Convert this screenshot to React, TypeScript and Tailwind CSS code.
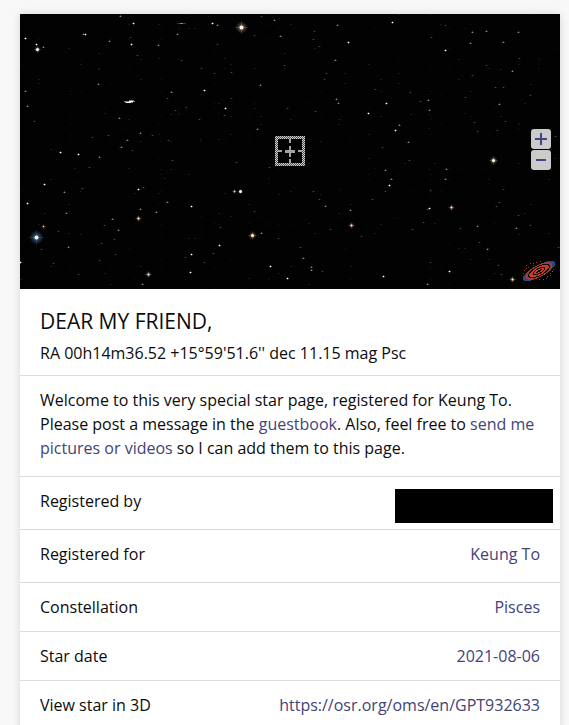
import type { ReactNode } from 'react';

type Point = [x: number, y: number];

const BRIGHT: Point[] = [
  [16, 30], [113, 9], [111, 30], [184, 76], [205, 94], [328, 28], [348, 99], [366, 89], [425, 36], [375, 116],
  [40, 138], [58, 140], [24, 170], [118, 175], [7, 189], [171, 192], [171, 240], [170, 258], [199, 231], [250, 252],
  [267, 264], [369, 171], [429, 257], [363, 262], [65, 20], [372, 8], [192, 9], [5, 24], [0, 248], [409, 194],
];

const MEDIUM: Point[] = [
  [23, 33], [63, 20], [89, 27], [100, 2], [138, 31], [157, 20], [78, 70], [5, 77], [7, 92], [99, 104], [101, 133],
  [107, 126], [120, 119], [151, 78], [197, 11], [254, 6], [260, 22], [317, 11], [315, 46], [240, 71], [316, 85],
  [318, 89], [452, 18], [466, 17], [450, 29], [483, 28], [498, 18], [492, 57], [479, 90], [408, 86], [409, 96],
  [379, 111], [388, 128], [79, 143], [44, 178], [46, 199], [92, 205], [120, 195], [136, 198], [147, 188], [98, 216],
  [48, 233], [122, 270], [241, 219], [291, 253], [291, 256], [283, 244], [330, 196], [305, 192],
  [426, 155], [425, 165], [365, 156], [371, 165], [496, 214], [457, 212], [467, 235], [407, 270], [237, 115],
];

const DIM: Point[] = [
  [110, 23], [117, 41], [161, 46], [14, 107], [88, 121], [132, 121], [147, 84], [155, 96], [166, 93], [148, 126],
  [72, 123], [241, 2], [234, 21], [197, 30], [211, 58], [294, 17], [299, 32], [293, 25], [194, 59], [181, 54],
  [211, 84], [204, 101], [264, 51], [306, 59], [304, 65], [267, 94], [295, 97], [179, 105], [355, 75], [425, 11],
  [411, 23], [499, 44], [466, 51], [452, 61], [475, 73], [483, 73], [510, 81], [445, 83], [390, 78], [400, 87],
  [454, 108], [457, 117], [477, 116], [485, 107], [535, 122], [362, 133], [69, 153], [100, 133], [112, 136],
  [152, 146], [62, 174], [123, 173], [21, 235], [38, 217], [84, 211], [94, 225], [81, 229], [95, 240], [79, 246],
  [58, 260], [165, 243], [33, 249], [216, 148], [249, 153], [200, 213], [193, 239], [184, 248], [302, 257],
  [280, 233], [299, 185], [310, 215], [341, 222], [234, 197], [293, 177], [352, 185], [258, 224], [365, 177],
  [389, 146], [410, 176], [407, 195], [483, 175], [476, 192], [479, 188], [498, 201], [392, 215], [403, 208],
  [440, 214], [459, 228], [478, 251], [481, 260], [410, 248], [538, 233], [510, 211],
];

const GLOWING = [
  { x: 17, y: 35, r: 3, core: 3, color: '#d8d0b8' },
  { x: 221, y: 13, r: 6, core: 4, color: '#c9a978' },
  { x: 16, y: 223, r: 7, core: 4, color: '#5f9bd8' },
  { x: 232, y: 221, r: 4, core: 3, color: '#d8964f' },
  { x: 473, y: 146, r: 4, core: 3, color: '#d8c08a' },
  { x: 220, y: 177, r: 2, core: 3, color: '#b8cce0' },
  { x: 214, y: 177, r: 2, core: 1, color: '#b8cce0' },
  { x: 118, y: 204, r: 3, core: 2, color: '#c98c50' },
  { x: 331, y: 211, r: 3, core: 2, color: '#c97850' },
  { x: 431, y: 193, r: 3, core: 2, color: '#c86a40' },
  { x: 128, y: 260, r: 3, core: 2, color: '#a8a8a0' },
  { x: 492, y: 265, r: 3, core: 2, color: '#c8985a' },
  { x: 23, y: 212, r: 2, core: 1, color: '#d88030' },
];

// faint background grain, same on every render
const GRAIN: Point[] = Array.from({ length: 420 }, (_, i) => [(i * 197 + i * i * 31) % 540, (i * 83 + i * i * 17) % 275]);

function StarField() {
  return (
    <svg className="block size-full" viewBox="0 0 540 275" preserveAspectRatio="xMidYMid slice" shapeRendering="crispEdges" role="img" aria-label="Star map">
      <defs>
        <pattern id="checker" width="2" height="2" patternUnits="userSpaceOnUse">
          <rect width="2" height="2" fill="#4c4c4c" />
          <rect width="1" height="1" fill="#d0d0d0" />
          <rect x="1" y="1" width="1" height="1" fill="#d0d0d0" />
        </pattern>
        {GLOWING.map((s, i) => (
          <radialGradient key={i} id={`glow-${i}`}>
            <stop offset="0" stopColor={s.color} stopOpacity="0.85" />
            <stop offset="0.4" stopColor={s.color} stopOpacity="0.4" />
            <stop offset="1" stopColor={s.color} stopOpacity="0" />
          </radialGradient>
        ))}
      </defs>
      <rect width="540" height="275" fill="#020202" />
      {GRAIN.map(([x, y], i) => (
        <rect key={i} x={x} y={y} width="2" height="1" fill={i % 3 ? '#0f0d0b' : '#1a1815'} />
      ))}
      {DIM.map(([x, y], i) => (
        <g key={i}>
          <rect x={x - 1} y={y} width="3" height="1" fill="#181614" />
          <rect x={x} y={y} width="1" height="1" fill={i % 4 ? '#4c4a46' : '#5e4030'} />
        </g>
      ))}
      {MEDIUM.map(([x, y], i) => (
        <g key={i}>
          <rect x={x - 1} y={y} width="3" height="1" fill="#35322e" />
          <rect x={x} y={y - 1} width="1" height="2" fill="#403c38" />
          <rect x={x} y={y} width="1" height="1" fill="#8c887e" />
        </g>
      ))}
      {BRIGHT.map(([x, y], i) => (
        <g key={i}>
          <rect x={x - 1} y={y} width="3" height="1" fill="#66625a" />
          <rect x={x} y={y - 1} width="1" height="3" fill="#4a4640" />
          <rect x={x} y={y} width="1" height="1" fill="#ffffff" />
        </g>
      ))}
      {GLOWING.map((s, i) => (
        <g key={i}>
          <circle cx={s.x + 0.5} cy={s.y + 0.5} r={s.r} fill={`url(#glow-${i})`} />
          <rect x={s.x - s.r} y={s.y} width={s.r * 2 + 1} height="1" fill={s.color} opacity="0.2" />
          <rect x={s.x} y={s.y - s.r} width="1" height={s.r * 2 + 1} fill={s.color} opacity="0.2" />
          <circle cx={s.x + 0.5} cy={s.y + 0.5} r={s.core / 2} fill="#fff8e8" shapeRendering="auto" />
        </g>
      ))}

      {/* edge-on galaxies */}
      <path d="M104 87h11v1h-11zM105 88h8v1h-8zM109 86h5v1h-5z" fill="#7d858c" />
      <path d="M106 88h3v-1h4v1h-2v1h-5z" fill="#eef4f8" />
      <path d="M157 9h9v1h-9z" fill="#333333" />
      <path d="M160 9h3v1h-3z" fill="#888888" />

      {/* reticle */}
      <path d="M255 122h30v30h-30zM258 125v24h24v-24z" fill="url(#checker)" fillRule="evenodd" />
      <path d="M269 132h2v4h4v3h-4v4h-2v-4h-4v-3h4zM269 125h2v4h-2zM269 145h2v4h-2zM258 136h4v2h-4zM278 136h4v2h-4z" fill="#a3a3a3" />
    </svg>
  );
}

function GalaxyLogo() {
  return (
    <svg className="block h-5 w-8" viewBox="0 0 32 20" shapeRendering="crispEdges" aria-hidden="true">
      <g transform="rotate(-28 16 10)">
        <ellipse cx="16" cy="10" rx="18" ry="6" fill="#254a86" />
        <ellipse cx="16" cy="10" rx="15" ry="6" fill="#a33a36" />
        <ellipse cx="16" cy="10" rx="12" ry="5" fill="#0b0808" />
        <ellipse cx="16" cy="10" rx="11" ry="4" fill="#c83c2a" />
        <ellipse cx="16" cy="10" rx="7" ry="3" fill="#0b0808" />
        <ellipse cx="16" cy="10" rx="6" ry="2" fill="#c83c2a" />
        <ellipse cx="16" cy="10" rx="3" ry="1" fill="#0b0808" />
      </g>
      <path d="M3 4h1v1h-1zM7 2h1v1h-1zM10 2h1v1h-1zM13 1h1v1h-1zM17 0h1v1h-1zM1 9h1v1h-1zM3 7h1v1h-1zM24 15h1v1h-1zM27 14h1v1h-1zM29 10h1v1h-1zM20 18h1v1h-1zM16 18h1v1h-1z" fill="#b03a30" />
      <path d="M5 6h1v1h-1zM0 12h1v1h-1zM10 4h1v1h-1zM30 8h1v1h-1zM23 17h1v1h-1zM27 12h1v1h-1z" fill="#254a86" />
    </svg>
  );
}

function ZoomButton({ label, path }: { label: string; path: string }) {
  return (
    <button type="button" aria-label={label} className="flex size-5 items-center justify-center rounded-[3px] bg-[#cbcbcb]">
      <svg className="size-3" viewBox="0 0 12 12" fill="none" stroke="#454582" strokeWidth="2" aria-hidden="true">
        <path d={path} />
      </svg>
    </button>
  );
}

function TextLink({ children }: { children: ReactNode }) {
  return (
    <a href="#" className="text-[#434378]">
      {children}
    </a>
  );
}

function DetailRow({ label, roomy, children }: { label: string; roomy?: boolean; children?: ReactNode }) {
  return (
    <div className={`relative flex justify-between border-b border-[#dcdcdc] px-5 pt-3 ${roomy ? 'pb-4' : 'pb-3'}`}>
      <dt>{label}</dt>
      <dd className="text-[#434378]">{children}</dd>
    </div>
  );
}

export default function App() {
  return (
    <div className="h-screen overflow-hidden bg-[#f8f8f8] pt-3.5 pr-[9px] pl-5 font-['Open_Sans','Noto_Sans',sans-serif] text-base leading-6 text-[#0c0c0c]">
      <main className="bg-white shadow-[0_0_8px_rgba(0,0,0,0.14)]">
        <div className="relative h-[275px] overflow-hidden bg-black">
          <StarField />
          <div className="absolute top-[115px] right-[9px] flex flex-col gap-px">
            <ZoomButton label="Zoom in" path="M6 0v12M0 6h12" />
            <ZoomButton label="Zoom out" path="M1 6h10" />
          </div>
          <div className="absolute right-[5px] bottom-2">
            <GalaxyLogo />
          </div>
        </div>

        <header className="flex flex-col gap-2 border-b border-[#dcdcdc] px-5 pt-5 pb-2.5">
          <h1 className="text-[21px] leading-6">DEAR MY FRIEND,</h1>
          <p>RA 00h14m36.52 +15°59'51.6'' dec 11.15 mag Psc</p>
        </header>

        <p className="border-b border-[#dcdcdc] px-5 pt-3 pb-4">
          Welcome to this very special star page, registered for Keung To. Please post a message in the{' '}
          <TextLink>guestbook</TextLink>. Also, feel free to <TextLink>send me pictures or videos</TextLink> so I can add
          them to this page.
        </p>

        <dl>
          <DetailRow label="Registered by" roomy>
            <span className="absolute top-3 right-[7px] h-[34px] w-[158px] bg-black" />
          </DetailRow>
          <DetailRow label="Registered for" roomy>
            Keung To
          </DetailRow>
          <DetailRow label="Constellation">Pisces</DetailRow>
          <DetailRow label="Star date">2021-08-06</DetailRow>
          <DetailRow label="View star in 3D">
            <TextLink>https://osr.org/oms/en/GPT932633</TextLink>
          </DetailRow>
        </dl>
      </main>
    </div>
  );
}
